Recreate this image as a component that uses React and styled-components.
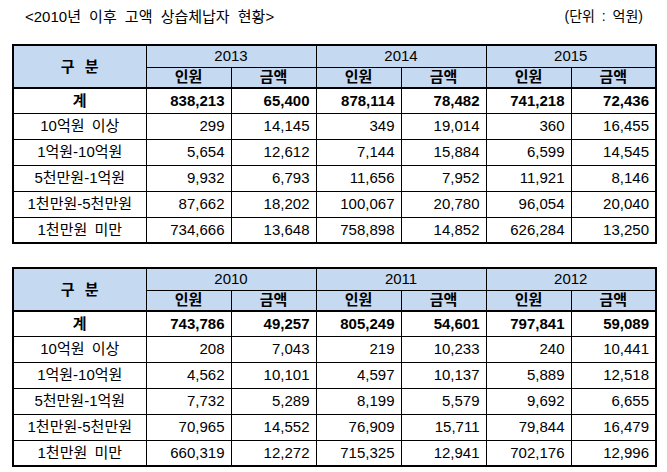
import React from "react";
import styled, { createGlobalStyle } from "styled-components";

const GlobalStyle = createGlobalStyle`
  body {
    margin: 0;
    background: #ffffff;
    font-family: "Liberation Sans", "Noto Sans CJK KR", sans-serif;
    color: #000000;
  }
`;

const Page = styled.div`
  width: 667px;
  height: 472px;
  overflow: hidden;
`;

const TitleBar = styled.div`
  display: flex;
  justify-content: space-between;
  align-items: center;
  height: 30px;
  padding: 0 24px 0 25px;
  font-size: 15px;
`;

const Title = styled.span`
  font-weight: 400;
  word-spacing: 4px;
`;

const Unit = styled.span`
  font-size: 14px;
  word-spacing: 3px;
`;

const Tables = styled.div`
  display: flex;
  flex-direction: column;
  gap: 23px;
  margin: 14px 0 0 12px;
`;

const Table = styled.table`
  border-collapse: collapse;
  table-layout: fixed;
  width: 645px;
  border: 2px solid #000;
  font-size: 14px;
  line-height: 16px;
`;

const Row = styled.tr`
  height: ${(p) => p.$h}px;
`;

const HeadCell = styled.th`
  background: #c5d9f1;
  border: 1px solid #000;
  font-weight: ${(p) => (p.$bold ? 700 : 400)};
  font-size: 15px;
  word-spacing: ${(p) => (p.$wide ? 6 : 0)}px;
  text-align: center;
  padding: 0;
  border-bottom-width: ${(p) => (p.$last ? 2 : 1)}px;
`;

const LabelCell = styled.td`
  border: 1px solid #000;
  text-align: center;
  padding: 0;
  font-size: 15px;
  word-spacing: 3px;
  font-weight: ${(p) => (p.$bold ? 700 : 400)};
  white-space: nowrap;
`;

const NumCell = styled.td`
  border: 1px solid #000;
  text-align: right;
  padding: 0 6px 0 0;
  font-weight: ${(p) => (p.$bold ? 700 : 400)};
  font-size: 15px;
`;

const labels = ["10억원 이상", "1억원-10억원", "5천만원-1억원", "1천만원-5천만원", "1천만원 미만"];

const recent = {
  years: ["2013", "2014", "2015"],
  total: ["838,213", "65,400", "878,114", "78,482", "741,218", "72,436"],
  rows: [
    ["299", "14,145", "349", "19,014", "360", "16,455"],
    ["5,654", "12,612", "7,144", "15,884", "6,599", "14,545"],
    ["9,932", "6,793", "11,656", "7,952", "11,921", "8,146"],
    ["87,662", "18,202", "100,067", "20,780", "96,054", "20,040"],
    ["734,666", "13,648", "758,898", "14,852", "626,284", "13,250"],
  ],
};

const earlier = {
  years: ["2010", "2011", "2012"],
  total: ["743,786", "49,257", "805,249", "54,601", "797,841", "59,089"],
  rows: [
    ["208", "7,043", "219", "10,233", "240", "10,441"],
    ["4,562", "10,101", "4,597", "10,137", "5,889", "12,518"],
    ["7,732", "5,289", "8,199", "5,579", "9,692", "6,655"],
    ["70,965", "14,552", "76,909", "15,711", "79,844", "16,479"],
    ["660,319", "12,272", "715,325", "12,941", "702,176", "12,996"],
  ],
};

function ArrearsTable({ data }) {
  return (
    <Table>
      <colgroup>
        <col style={{ width: 133 }} />
        {[0, 1, 2, 3, 4, 5].map((i) => (
          <col key={i} style={{ width: 85 }} />
        ))}
      </colgroup>
      <thead>
        <Row $h={22}>
          <HeadCell rowSpan={2} $bold $wide $last>
            구 분
          </HeadCell>
          {data.years.map((y) => (
            <HeadCell key={y} colSpan={2}>
              {y}
            </HeadCell>
          ))}
        </Row>
        <Row $h={21}>
          {data.years.map((y) => (
            <React.Fragment key={y}>
              <HeadCell $bold $last>인원</HeadCell>
              <HeadCell $bold $last>금액</HeadCell>
            </React.Fragment>
          ))}
        </Row>
      </thead>
      <tbody>
        <Row $h={25}>
          <LabelCell $bold>계</LabelCell>
          {data.total.map((v, i) => (
            <NumCell key={i} $bold>
              {v}
            </NumCell>
          ))}
        </Row>
        {data.rows.map((r, ri) => (
          <Row key={ri} $h={26}>
            <LabelCell>{labels[ri]}</LabelCell>
            {r.map((v, i) => (
              <NumCell key={i}>{v}</NumCell>
            ))}
          </Row>
        ))}
      </tbody>
    </Table>
  );
}

export default function App() {
  return (
    <Page>
      <GlobalStyle />
      <TitleBar>
        <Title>&lt;2010년 이후 고액 상습체납자 현황&gt;</Title>
        <Unit>(단위 : 억원)</Unit>
      </TitleBar>
      <Tables>
        <ArrearsTable data={recent} />
        <ArrearsTable data={earlier} />
      </Tables>
    </Page>
  );
}
